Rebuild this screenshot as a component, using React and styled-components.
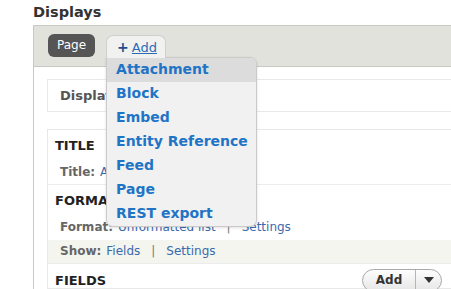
import React from 'react'
import styled, { createGlobalStyle } from 'styled-components'

const GlobalStyle = createGlobalStyle`
  html, body {
    margin: 0;
    padding: 0;
    background: #fff;
    overflow: hidden;
  }
  body {
    font-family: "DejaVu Sans", Verdana, sans-serif;
    color: #333;
  }
`

const Page = styled.div`
  width: 470px;
  height: 289px;
  overflow: hidden;
  padding: 3px 0 0 33px;
  box-sizing: border-box;
`

const Heading = styled.h2`
  margin: 0 0 4px;
  font-size: 14.5px;
  line-height: 18px;
  font-weight: bold;
  color: #333;
`

const Container = styled.div`
  border-top: 1px solid #c9c9c4;
  border-left: 1px solid #c9c9c4;
`

const TabBar = styled.div`
  display: flex;
  align-items: flex-start;
  gap: 11px;
  height: 41px;
  padding: 8px 0 0 14px;
  box-sizing: border-box;
  background: #e1e2dc;
  border-bottom: 1px solid #c9c9c4;
`

const PageTab = styled.span`
  display: inline-block;
  height: 23px;
  line-height: 23px;
  padding: 0 9px;
  border-radius: 6px;
  background: #555;
  color: #fff;
  font-size: 12px;
`

const AddWrap = styled.div`
  position: relative;
  margin-top: 1px;
`

const AddTab = styled.div`
  position: relative;
  z-index: 3;
  height: 23px;
  padding: 0 8px 0 10px;
  box-sizing: border-box;
  display: flex;
  align-items: center;
  gap: 3px;
  background: #f1f1f0;
  border: 1px solid #cfcfcf;
  border-bottom: none;
  border-radius: 7px 7px 0 0;
`

const Plus = styled.span`
  color: #1d4f91;
  font-size: 14px;
  font-weight: bold;
  line-height: 14px;
`

const AddLink = styled.a`
  color: #2b6cb8;
  font-size: 13px;
  text-decoration: underline;
`

const Menu = styled.ul`
  position: absolute;
  z-index: 2;
  top: 22px;
  left: 0;
  width: 151px;
  margin: 0;
  padding: 0;
  list-style: none;
  background: #f1f1f1;
  border: 1px solid #cacaca;
  border-radius: 0 7px 7px 7px;
  box-shadow: 0 1px 3px rgba(0, 0, 0, 0.12);
  overflow: hidden;
  box-sizing: border-box;
`

const MenuItem = styled.li`
  height: 24px;
  line-height: 23px;
  padding-left: 9px;
  font-size: 14px;
  font-weight: bold;
  color: #1f74c6;
  background: ${p => (p.active ? '#dcdcdc' : 'transparent')};
  white-space: nowrap;
`

const Content = styled.div`
  padding: 12px 0 0 13px;
`

const DisplayBox = styled.div`
  height: 33px;
  box-sizing: border-box;
  border: 1px solid #e8e8e8;
  border-right: none;
  padding-left: 12px;
  line-height: 31px;
  font-size: 13px;
  font-weight: bold;
  color: #555;
`

const Sections = styled.div`
  margin-top: 17px;
  border: 1px solid #e8e8e8;
  border-right: none;
`

const Section = styled.div`
  padding-bottom: ${p => p.pb || 0}px;
  border-top: ${p => (p.first ? 'none' : '1px solid #ececec')};
`

const SectionHead = styled.div`
  display: flex;
  align-items: center;
  justify-content: space-between;
  padding: ${p => p.pt || 7}px 28px 0 7px;
  height: 16px;
  font-size: 13px;
  font-weight: bold;
  color: #222;
`

const Row = styled.div`
  margin-top: ${p => p.mt || 0}px;
  padding-left: 12px;
  height: ${p => p.h || 20}px;
  line-height: ${p => p.h || 20}px;
  font-size: 12px;
  color: #666;
  background: ${p => p.tint ? '#f3f5ee' : 'transparent'};
  white-space: nowrap;
`

const Label = styled.span`
  font-weight: bold;
  color: #666;
  margin-right: 5px;
`

const Link = styled.a`
  color: #3a69ad;
  text-decoration: none;
`

const Sep = styled.span`
  color: #777;
  margin: 0 11px;
`

const SplitButton = styled.div`
  display: flex;
  height: 23px;
  box-sizing: border-box;
  border: 1px solid #a8a8a8;
  border-radius: 12px;
  background: linear-gradient(#fdfdfd, #e6e6e6);
  overflow: hidden;
`

const ButtonMain = styled.span`
  width: 52px;
  text-align: center;
  line-height: 21px;
  font-size: 12px;
  font-weight: bold;
  color: #333;
  border-right: 1px solid #b5b5b5;
`

const ButtonArrow = styled.span`
  width: 25px;
  display: flex;
  align-items: center;
  justify-content: center;
`

const menuItems = ['Attachment', 'Block', 'Embed', 'Entity Reference', 'Feed', 'Page', 'REST export']

export default function App() {
  return (
    <>
      <GlobalStyle />
      <Page>
        <Heading>Displays</Heading>
        <Container>
          <TabBar>
            <PageTab>Page</PageTab>
            <AddWrap>
              <AddTab>
                <Plus>+</Plus>
                <AddLink href="#">Add</AddLink>
              </AddTab>
              <Menu>
                {menuItems.map((item, i) => (
                  <MenuItem key={item} active={i === 0}>{item}</MenuItem>
                ))}
              </Menu>
            </AddWrap>
          </TabBar>
          <Content>
            <DisplayBox>Display name: Page</DisplayBox>
            <Sections>
              <Section first pb={2}>
                <SectionHead>TITLE</SectionHead>
                <Row mt={9}>
                  <Label>Title:</Label>
                  <Link href="#">Articles</Link>
                </Row>
              </Section>
              <Section>
                <SectionHead>FORMAT</SectionHead>
                <Row mt={9}>
                  <Label>Format:</Label>
                  <Link href="#">Unformatted list</Link>
                  <Sep>|</Sep>
                  <Link href="#">Settings</Link>
                </Row>
                <Row mt={3} h={23} tint>
                  <Label>Show:</Label>
                  <Link href="#">Fields</Link>
                  <Sep>|</Sep>
                  <Link href="#">Settings</Link>
                </Row>
              </Section>
              <Section>
                <SectionHead pt={8}>
                  <span>FIELDS</span>
                  <SplitButton>
                    <ButtonMain>Add</ButtonMain>
                    <ButtonArrow>
                      <svg width="10" height="6" viewBox="0 0 10 6">
                        <path d="M0 0 L10 0 L5 6 Z" fill="#333" />
                      </svg>
                    </ButtonArrow>
                  </SplitButton>
                </SectionHead>
              </Section>
            </Sections>
          </Content>
        </Container>
      </Page>
    </>
  )
}
